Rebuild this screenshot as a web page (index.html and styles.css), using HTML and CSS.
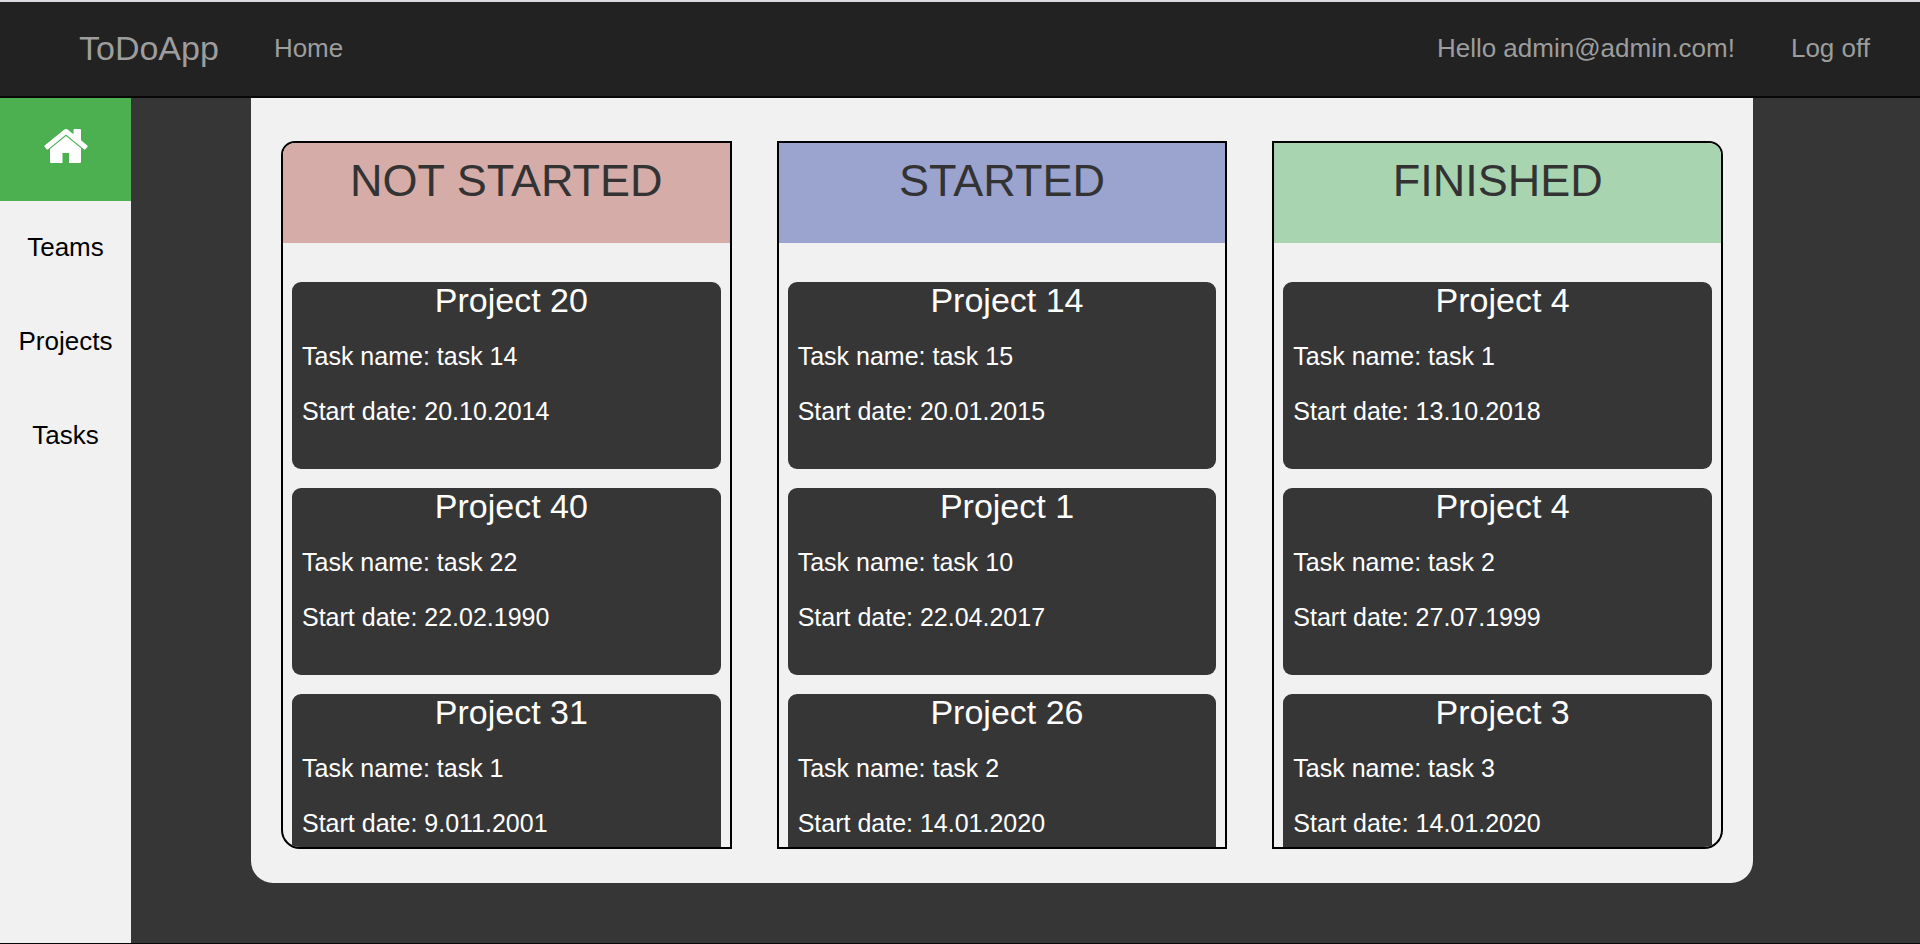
FILE: index.html
```html
<!DOCTYPE html>
<html lang="en">
<head>
<meta charset="utf-8">
<title>ToDoApp</title>
<link rel="stylesheet" href="styles.css">
</head>
<body>
<header class="navbar">
  <a class="brand" href="#">ToDoApp</a>
  <nav class="nav-main"><a class="nav-link" href="#">Home</a></nav>
  <nav class="nav-user">
    <a class="nav-link" href="#">Hello admin@admin.com!</a>
    <a class="nav-link" href="#">Log off</a>
  </nav>
</header>
<div class="layout">
  <nav class="sidebar">
    <a class="side-link side-home" href="#" aria-label="Home">
      <svg class="home-icon" viewBox="0 0 44 34" aria-hidden="true">
        <path d="M29.5 1Q29.5 0 30.5 0H36Q37 0 37 1V11.2L43.3 16.6Q43.9 17.2 43.4 17.9L41.3 20.2Q40.6 20.8 39.9 20.2L22 5.6L4.1 20.2Q3.4 20.8 2.7 20.2L0.6 17.9Q0.1 17.2 0.7 16.6L20.3 0.6Q22 -0.6 23.7 0.6L29.5 5.2Z"/>
        <path d="M22 6.9L37 19.2V32.8Q37 34 35.8 34H25V24H18.5V34H7.2Q6 34 6 32.8V20Z"/>
      </svg>
    </a>
    <a class="side-link" href="#">Teams</a>
    <a class="side-link" href="#">Projects</a>
    <a class="side-link" href="#">Tasks</a>
  </nav>
  <main class="board">
    <section class="column column-first">
      <h3 class="column-title not-started">NOT STARTED</h3>
      <div class="cards">
        <article class="card"><h4 class="card-title">Project 20</h4><p class="card-line">Task name: task 14</p><p class="card-line">Start date: 20.10.2014</p></article>
        <article class="card"><h4 class="card-title">Project 40</h4><p class="card-line">Task name: task 22</p><p class="card-line">Start date: 22.02.1990</p></article>
        <article class="card"><h4 class="card-title">Project 31</h4><p class="card-line">Task name: task 1</p><p class="card-line">Start date: 9.011.2001</p></article>
      </div>
    </section>
    <section class="column">
      <h3 class="column-title started">STARTED</h3>
      <div class="cards">
        <article class="card"><h4 class="card-title">Project 14</h4><p class="card-line">Task name: task 15</p><p class="card-line">Start date: 20.01.2015</p></article>
        <article class="card"><h4 class="card-title">Project 1</h4><p class="card-line">Task name: task 10</p><p class="card-line">Start date: 22.04.2017</p></article>
        <article class="card"><h4 class="card-title">Project 26</h4><p class="card-line">Task name: task 2</p><p class="card-line">Start date: 14.01.2020</p></article>
      </div>
    </section>
    <section class="column column-last">
      <h3 class="column-title finished">FINISHED</h3>
      <div class="cards">
        <article class="card"><h4 class="card-title">Project 4</h4><p class="card-line">Task name: task 1</p><p class="card-line">Start date: 13.10.2018</p></article>
        <article class="card"><h4 class="card-title">Project 4</h4><p class="card-line">Task name: task 2</p><p class="card-line">Start date: 27.07.1999</p></article>
        <article class="card"><h4 class="card-title">Project 3</h4><p class="card-line">Task name: task 3</p><p class="card-line">Start date: 14.01.2020</p></article>
      </div>
    </section>
  </main>
</div>
</body>
</html>
```
FILE: styles.css
```css
* {
  box-sizing: border-box;
}

body {
  margin: 0;
  min-height: 100vh;
  display: flex;
  flex-direction: column;
  border-top: 2px solid #dadae3;
  border-bottom: 1px solid #080808;
  background: #363636;
  color: #333;
  font-family: "Liberation Sans", Arial, sans-serif;
  font-size: 26px;
  line-height: 37px;
}

a {
  text-decoration: none;
}

.navbar {
  display: flex;
  align-items: center;
  gap: 55px;
  padding: 28px 50px 29px 79px;
  background: #222;
  border-bottom: 2px solid #080808;
}

.brand {
  color: #9d9d9d;
  font-size: 34px;
}

.nav-link {
  color: #9d9d9d;
}

.nav-user {
  display: flex;
  gap: 56px;
  margin-left: auto;
}

.layout {
  flex: 1;
  display: flex;
  align-items: stretch;
}

.sidebar {
  flex: none;
  width: 131px;
  background: #f1f1f1;
}

.side-link {
  display: block;
  padding: 28px 0 29px;
  color: #000;
  text-align: center;
}

.side-home {
  padding: 31px 0 38px;
  background: #4caf50;
}

.home-icon {
  display: block;
  width: 44px;
  height: 34px;
  margin: 0 auto;
  fill: #fff;
}

.board {
  flex: 1;
  align-self: flex-start;
  display: grid;
  grid-template-columns: repeat(3, 1fr);
  gap: 45px;
  margin: 0 167px 0 120px;
  padding: 43px 30px 34px;
  background: #f1f1f1;
  border-radius: 0 0 22px 22px;
}

.column {
  max-height: 75vh;
  overflow-y: auto;
  scrollbar-width: none;
  border: 2px solid #000;
}

.column-first {
  border-radius: 14px 0 0 19px;
}

.column-last {
  border-radius: 0 14px 19px 0;
}

.column-title {
  margin: 0;
  padding: 13px 0 37px;
  font-size: 45px;
  font-weight: 400;
  line-height: 50px;
  text-align: center;
}

.not-started {
  background: #d5aca8;
}

.started {
  background: #9ba3cf;
}

.finished {
  background: #a8d5b0;
}

.cards {
  display: grid;
  gap: 19px;
  padding: 39px 9px 19px;
}

.card {
  padding: 0 0 21px 10px;
  background: #363636;
  border-radius: 9px;
  color: #fff;
}

.card-title {
  margin: 0 0 19px;
  font-size: 34px;
  font-weight: 400;
  text-align: center;
}

.card-line {
  margin: 0 0 18px;
  font-size: 25px;
}
```
